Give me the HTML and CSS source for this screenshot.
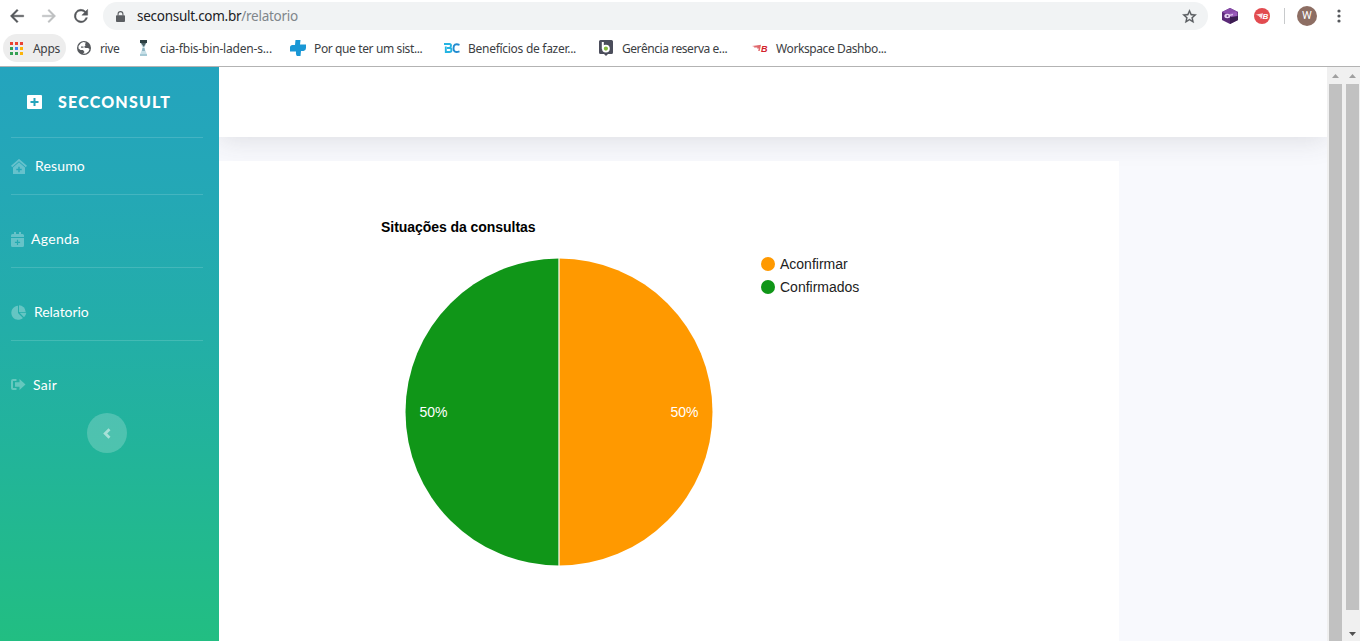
FILE: index.html
```html
<!DOCTYPE html>
<html lang="pt-BR">
<head>
<meta charset="utf-8">
<title>Relatorio</title>
<link rel="stylesheet" href="styles.css">
</head>
<body>
<header class="browser">
  <div class="toolbar">
    <svg class="nav-icon" viewBox="0 0 24 24"><path d="M20 11H7.8l5.6-5.6L12 4l-8 8 8 8 1.4-1.4L7.8 13H20z" fill="#54575b" stroke="#54575b" stroke-width=".5"/></svg>
    <svg class="nav-icon" viewBox="0 0 24 24"><path d="M4 11h12.2l-5.6-5.6L12 4l8 8-8 8-1.4-1.4 5.6-5.6H4z" fill="#bdbfc1" stroke="#bdbfc1" stroke-width=".5"/></svg>
    <svg class="nav-icon" viewBox="0 0 24 24"><path d="M17.65 6.35A8 8 0 1 0 19.73 14h-2.08A6 6 0 1 1 12 6c1.66 0 3.14.69 4.22 1.78L13 11h7V4z" fill="#54575b" stroke="#54575b" stroke-width=".5"/></svg>
    <div class="omnibox">
      <svg class="lock" viewBox="0 0 10 12"><path d="M1 4.5h8q1 0 1 1V11q0 1-1 1H1q-1 0-1-1V5.500q0-1 1-1z" fill="#5b5e62"/><path d="M2.300 5V3.300a2.700 2.700 0 0 1 5.400 0V5" fill="none" stroke="#5b5e62" stroke-width="1.200"/></svg>
      <span class="url">seconsult.com.br<span class="path">/relatorio</span></span>
      <svg class="star" viewBox="0 0 24 24"><path d="M22 9.240l-7.190-.62L12 2 9.190 8.630 2 9.240l5.460 4.730L5.820 21 12 17.270 18.180 21l-1.630-7.030zM12 15.400l-3.760 2.270 1-4.280-3.320-2.880 4.380-.38L12 6.100l1.710 4.040 4.380.38-3.320 2.880 1 4.280z" fill="#55585c" stroke="#55585c" stroke-width=".4"/></svg>
    </div>
    <div class="extensions">
      <svg width="16" height="16" viewBox="0 0 16 16"><path d="M8 0l8 4v8l-8 4-8-4V4z" fill="#5b2a78"/><path d="M8 0l8 4-8 4-8-4z" fill="#8a4cab"/><path d="M8 9l8-4v7l-8 4z" fill="#3c1d52"/><path d="M8 5l6-1 1.500 1v3L9 9z" fill="#9a5abb"/><ellipse cx="5.300" cy="8" rx="3" ry="2.200" fill="#e8d5f2"/><circle cx="5.500" cy="8" r="1" fill="#6b3a86"/><path d="M8 6.500l3-.8v1.500L8 8z" fill="#d8bbe6"/></svg>
      <svg width="16" height="16" viewBox="0 0 16 16"><circle cx="8" cy="8" r="8" fill="#e24b50"/><path d="M1.500 6.500L5 6l4-.8-1.300 5.300H6.200L6.600 9H5l.5-1.200H3.200l.8-.8z" fill="#fbe3e4"/><text x="8.600" y="11.200" class="b-mark" fill="#fff">B</text></svg>
      <span class="divider"></span>
      <span class="avatar">W</span>
      <svg class="dots" width="4" height="14" viewBox="0 0 4 14" fill="#55585c"><circle cx="2" cy="2" r="1.600"/><circle cx="2" cy="7" r="1.600"/><circle cx="2" cy="12" r="1.600"/></svg>
    </div>
  </div>
  <nav class="bookmarks">
    <a class="apps"><svg width="13" height="13" viewBox="0 0 13 13"><path d="M0 0h3v3H0zM5 0h3v3H5zM10 0h3v3h-3z" fill="#ea4335"/><path d="M0 5h3v3H0zM0 10h3v3H0zM5 10h3v3H5z" fill="#34a053"/><path d="M5 5h3v3H5z" fill="#4285f4"/><path d="M10 5h3v3h-3zM10 10h3v3h-3z" fill="#fbb40a"/></svg><span>Apps</span></a>
    <a class="bookmark short"><svg width="16" height="16" viewBox="0 0 16 16"><circle cx="8" cy="8" r="7" fill="#55585c"/><path d="M2.500 6L5 3l2.500-1 2.500.8-1 1.200.5 1.500L8 7 9.500 8H12l1.500 1-1 2.500-2.500 2L7 13.800 8.500 12 7 10H4.500L2.500 8.500z" fill="#fff"/><path d="M5 6.500h2.500v1.200H5z" fill="#55585c"/></svg><span class="s-rive">rive</span></a>
    <a class="bookmark"><svg width="16" height="16" viewBox="0 0 16 16"><path d="M4 0h7v3H4z" fill="#2e4144"/><path d="M4.500 3h6L8.300 8l2.500 6H4.200l2.500-6z" fill="#c6dfe7"/><path d="M5 3h5L7.800 7z" fill="#4d6468"/><path d="M4 14h7v2H4z" fill="#a5c9d5"/><path d="M6.500 8h2l.5 3H6z" fill="#8bb1bf"/></svg><span class="s-cia">cia-fbis-bin-laden-s...</span></a>
    <a class="bookmark"><svg width="16" height="16" viewBox="0 0 16 16"><path d="M5.500 0h5L10 4.500h6V8q0 2.500-2.500 3H11l-.5 5H6.800Q5.500 15 6 11.500H0V7.500Q0 5 2.500 5H5z" fill="#1997d5"/></svg><span class="s-por">Por que ter um sist...</span></a>
    <a class="bookmark"><svg width="16" height="16" viewBox="0 0 16 16" fill="none" stroke-width="1.900"><path d="M0 4h5.500q1.500 0 1.500 1.800T5.500 8H3M5.500 8Q7.500 8 7.500 10T5.500 12H1.800V6.500" stroke="#25b4e2"/><path d="M15.500 4.800q-6-2-6 3.400t6 3.200" stroke="#238bd0"/></svg><span class="s-ben">Benefícios de fazer...</span></a>
    <a class="bookmark"><svg width="16" height="16" viewBox="0 0 16 16"><path d="M2.500 0h11q1.500 0 1.500 1.500v11q0 1.500-1.500 1.500H10l-2 2-2-2H2.500Q1 14 1 12.500v-11Q1 0 2.500 0z" fill="#4b4d5b"/><path d="M4.800 2v7" stroke="#fff" stroke-width="2"/><circle cx="7.900" cy="8.600" r="3" fill="#84b83c" stroke="#fff" stroke-width="1.800"/></svg><span class="s-ger">Gerência reserva e...</span></a>
    <a class="bookmark"><svg width="16" height="16" viewBox="0 0 16 16"><path d="M0 6l4-.5 5-.7L7.700 11H6.200l.6-2.500H5L5.400 7.500H1.800L2.500 6.800z" fill="#e0696d"/><text x="8.900" y="11.500" class="b-mark large" fill="#d3232c">B</text></svg><span class="s-wor">Workspace Dashbo...</span></a>
  </nav>
</header>
<div class="viewport">
  <aside class="sidebar">
    <div class="brand"><svg width="15" height="14" viewBox="0 0 15 14"><rect width="15" height="14" rx="1" fill="#fff"/><path d="M7.500 3v8M3.500 7h8" stroke="#25a4bc" stroke-width="2"/></svg><span>SECCONSULT</span></div>
    <a class="item first"><svg width="16" height="15" viewBox="0 0 16 15"><path d="M.6 7.500L8 1l7.400 6.500" fill="none" stroke="currentColor" stroke-width="1.700"/><path fill-rule="evenodd" d="M8 3.200L14 8.500V15H2V8.500zM7.300 7.800v2h-2v1.400h2v2h1.400v-2h2V9.800h-2v-2z" fill="currentColor"/></svg><span class="resumo">Resumo</span></a>
    <a class="item"><svg width="13" height="15" viewBox="0 0 13 15"><path d="M1.500 2H3V0h2v2h3V0h2v2h1.500Q13 2 13 3.500V5H0V3.500Q0 2 1.500 2z" fill="currentColor"/><path fill-rule="evenodd" d="M0 6h13v7.500q0 1.500-1.500 1.500h-10Q0 15 0 13.500zM5.900 7.800v2H3.900v1.200h2v2h1.200v-2h2V9.800h-2v-2z" fill="currentColor"/></svg><span class="agenda">Agenda</span></a>
    <a class="item"><svg width="16" height="15" viewBox="0 0 16 15" fill="currentColor"><path d="M7 .8V8l5 5A7 7 0 1 1 7 .8z"/><path d="M8 .3A7 7 0 0 1 14.700 7H8z"/><path d="M8.600 7.800H15.300A7 7 0 0 1 13 12.300z"/></svg><span class="relatorio">Relatorio</span></a>
    <a class="item last"><svg width="15" height="11" viewBox="0 0 15 11"><path d="M5.500 1H2Q1 1 1 2v7q0 1 1 1h3.500" fill="none" stroke="currentColor" stroke-width="2"/><path d="M4 3.300h4.500V0L14.500 5.500 8.500 11V7.700H4z" fill="currentColor"/></svg><span class="sair">Sair</span></a>
    <button class="toggle" aria-label="Recolher"><svg width="8" height="11" viewBox="0 0 8 11"><path d="M6.500 1.200L2.200 5.500l4.300 4.300" fill="none" stroke="currentColor" stroke-width="2.800"/></svg></button>
  </aside>
  <main class="content">
    <div class="topbar"></div>
    <section class="report">
      <h1>Situações da consultas</h1>
      <div class="chart">
        <svg class="pie" width="308" height="308" viewBox="0 0 308 308">
          <path d="M154 .5a153.500 153.500 0 0 0 0 307z" fill="#109618"/>
          <path d="M154 .5a153.500 153.500 0 0 1 0 307z" fill="#ff9900"/>
          <path d="M154 0v308" stroke="#fff" stroke-opacity=".8" stroke-width="1.500"/>
          <text x="14.500" y="159">50%</text><text x="265.500" y="159">50%</text>
        </svg>
        <ul class="legend"><li><i class="orange"></i>Aconfirmar</li><li><i class="green"></i>Confirmados</li></ul>
      </div>
    </section>
  </main>
  <div class="scrollbar inner"><svg width="7" height="4" viewBox="0 0 7 4"><path d="M0 4L3.500 0 7 4z" fill="#a0a0a0"/></svg><div class="thumb"></div></div>
  <div class="scrollbar outer"><svg width="7" height="4" viewBox="0 0 7 4"><path d="M0 4L3.500 0 7 4z" fill="#a0a0a0"/></svg><div class="thumb"></div><svg class="down" width="7" height="4" viewBox="0 0 7 4"><path d="M0 0h7L3.500 4z" fill="#505050"/></svg></div>
</div>
</body>
</html>
```
FILE: styles.css
```css
* { box-sizing: border-box; }
body { margin: 0; height: 641px; overflow: hidden; display: flex; flex-direction: column; background: #fff; font-family: "Liberation Sans", Arial, sans-serif; }
svg { display: block; flex: none; }

.browser { height: 67px; flex: none; border-bottom: 1px solid #b3b3b3; font-family: "Noto Sans", "Open Sans", sans-serif; }
.toolbar { height: 32px; display: flex; align-items: center; padding-left: 7px; }
.nav-icon { width: 20px; height: 20px; margin-right: 12px; }
.omnibox { width: 1105px; height: 28px; border-radius: 14px; background: #f1f3f4; display: flex; align-items: center; padding: 0 10px 0 13px; }
.lock { width: 9px; height: 11px; }
.url { margin-left: 12px; font-size: 13.500px; letter-spacing: -.27px; color: #202124; flex: 1; white-space: nowrap; }
.path { color: #80868b; }
.star { width: 17px; height: 17px; }
.extensions { flex: 1; display: flex; align-items: center; padding-left: 14px; gap: 16px; }
.b-mark { font: italic bold 8px "Liberation Sans", sans-serif; }
.b-mark.large { font-size: 9px; }
.divider { width: 1px; height: 16px; margin-left: -2px; background: #c8cacc; }
.avatar { width: 20px; height: 20px; margin-left: -4px; border-radius: 50%; background: #8d6e63; color: #fff; font: 11px/20px Roboto, sans-serif; text-align: center; }
.dots { margin-left: 4px; }
.bookmarks { height: 32px; display: flex; align-items: center; padding-left: 3px; font-size: 12px; color: #3c4043; white-space: nowrap; }
.apps { width: 63px; height: 28px; margin-right: 10px; padding-left: 7px; border-radius: 14px; background: #ededed; display: flex; align-items: center; gap: 10px; letter-spacing: -.3px; }
.bookmark { width: 154px; display: flex; align-items: center; gap: 8px; }
.bookmark.short { width: 60px; }
.s-rive { letter-spacing: -.4px; }
.s-cia { letter-spacing: -.18px; }
.s-por { letter-spacing: -.38px; }
.s-ben { letter-spacing: -.28px; }
.s-ger { letter-spacing: -.44px; }
.s-wor { letter-spacing: -.4px; }

.viewport { flex: 1; min-height: 0; display: flex; }
.sidebar { width: 219px; flex: none; padding: 0 16px 0 11px; display: flex; flex-direction: column; background: linear-gradient(180deg, #24a4be 0%, #24a8b5 23%, #23aea8 46%, #22b49a 67%, #22be82 100%); color: #fff; font-family: Lato, sans-serif; }
.brand { height: 71px; flex: none; display: flex; align-items: center; gap: 16px; padding-left: 16px; border-bottom: 1px solid rgba(255,255,255,.15); font-size: 16px; font-weight: 900; letter-spacing: 1.200px; }
.brand span, .item span { padding-bottom: 2px; }
.item { height: 73px; flex: none; display: flex; align-items: center; padding-top: 16px; border-bottom: 1px solid rgba(255,255,255,.15); font-size: 14px; }
.item svg { color: rgba(255,255,255,.3); }
.item.first { height: 57px; padding-top: 0; }
.item.last { border: 0; }
.item.last svg { margin-top: -2px; }
.resumo { margin-left: 8px; letter-spacing: .15px; }
.agenda { margin-left: 7px; letter-spacing: .3px; }
.relatorio { margin-left: 7px; letter-spacing: -.05px; }
.sair { margin-left: 7px; letter-spacing: .3px; }
.toggle { width: 40px; height: 40px; margin: -1px 0 0 76px; padding: 0; border: 0; border-radius: 50%; background: rgba(255,255,255,.2); color: rgba(255,255,255,.5); display: flex; align-items: center; justify-content: center; }

.content { flex: 1; min-width: 0; overflow: hidden; background: #f8f9fd; display: flex; flex-direction: column; }
.topbar { height: 70px; flex: none; background: #fff; box-shadow: 0 2.400px 28px rgba(58,59,69,.15); margin-bottom: 24px; }
.report { width: 900px; flex: 1; position: relative; padding: 58px 0 0 162px; background: #fff; }
h1 { margin: 0; font-size: 14px; line-height: 16px; letter-spacing: -.05px; color: #000; }
.chart { display: flex; padding: 23px 0 0 24px; }
.pie text { fill: #fff; font-size: 14px; }
.legend { list-style: none; margin: -2px 0 0 48px; padding: 0; font-size: 14px; color: #222; }
.legend li { display: flex; align-items: center; height: 16px; margin-bottom: 7px; }
.legend i { width: 14px; height: 14px; margin-right: 5px; border-radius: 50%; }
.orange { background: #ff9900; }
.green { background: #109618; }

.scrollbar { flex: none; background: #f0f0f0; padding-top: 7px; display: flex; flex-direction: column; }
.scrollbar svg { margin-left: 5px; }
.scrollbar.inner { width: 17px; }
.scrollbar.outer { width: 16px; }
.thumb { width: 13px; margin: 6px 0 0 2px; background: #c1c1c1; flex: 1; }
.outer .thumb { flex: none; height: 526px; }
.outer .down { margin-top: 22px; }
```
